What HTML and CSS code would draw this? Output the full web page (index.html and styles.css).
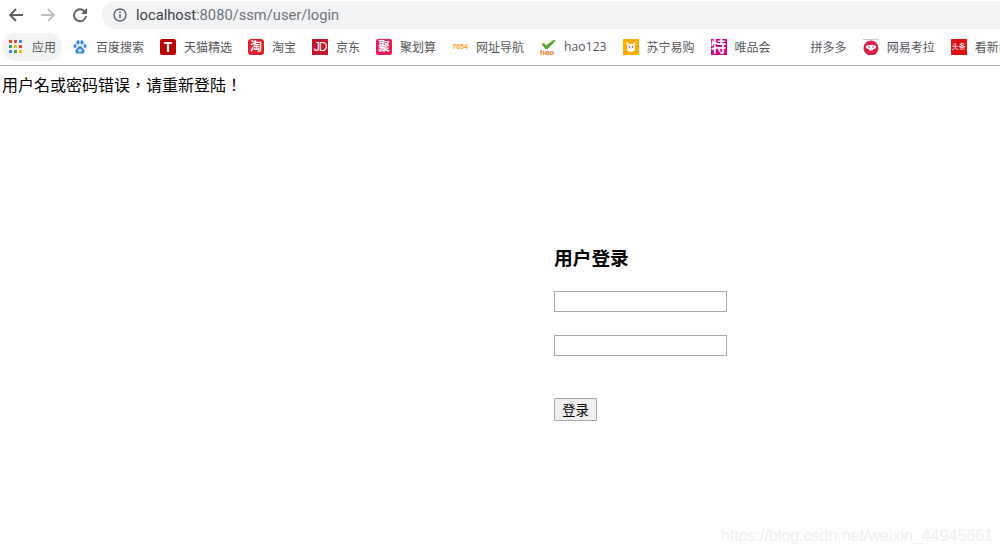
FILE: index.html
```html
<!DOCTYPE html>
<html lang="zh-CN">
<head>
    <meta charset="UTF-8">
    <meta name="viewport" content="width=device-width, initial-scale=1.0">
    <title>用户登录</title>
    <link rel="stylesheet" href="styles.css">
</head>
<body>
    <div class="browser-top">
        <div class="toolbar">
            <svg class="nav-icon" viewBox="0 0 16 16"><path d="M15 8H2.5M8 2L2 8l6 6" fill="none" stroke="#5f6368" stroke-width="1.9"/></svg>
            <svg class="nav-icon" viewBox="0 0 16 16"><path d="M1 8h12.5M8 2l6 6-6 6" fill="none" stroke="#bdc1c6" stroke-width="1.9"/></svg>
            <svg class="nav-icon" viewBox="0 0 16 16"><path d="M13.2 5.2A6 6 0 1 0 14 9" fill="none" stroke="#5f6368" stroke-width="1.9"/><path d="M15 1v6H9z" fill="#5f6368"/></svg>
            <div class="address-bar">
                <svg class="info-icon" viewBox="0 0 14 14"><circle cx="7" cy="7" r="6" fill="none" stroke="#5f6368" stroke-width="1.4"/><path d="M7 6v4.2M7 3.6v1.4" stroke="#5f6368" stroke-width="1.5"/></svg>
                <span class="host">localhost</span><span class="path">:8080/ssm/user/login</span>
            </div>
        </div>
        <div class="bookmarks">
            <div class="bookmark apps">
                <svg class="bm-icon" viewBox="0 0 14 14">
                    <rect x="0" y="0" width="3" height="3" fill="#ea4335"/><rect x="5" y="0" width="3" height="3" fill="#ea4335"/><rect x="10" y="0" width="3" height="3" fill="#4285f4"/>
                    <rect x="0" y="5" width="3" height="3" fill="#34a853"/><rect x="5" y="5" width="3" height="3" fill="#fbbc05"/><rect x="10" y="5" width="3" height="3" fill="#ea4335"/>
                    <rect x="0" y="10" width="3" height="3" fill="#4285f4"/><rect x="5" y="10" width="3" height="3" fill="#34a853"/><rect x="10" y="10" width="3" height="3" fill="#fbbc05"/>
                </svg>
                <span>应用</span>
            </div>
            <div class="bookmark">
                <svg class="bm-icon" viewBox="0 0 16 16" fill="#3388ee">
                    <ellipse cx="3" cy="7" rx="1.6" ry="2.1"/><ellipse cx="6" cy="3.4" rx="1.6" ry="2.2"/><ellipse cx="10" cy="3.4" rx="1.6" ry="2.2"/><ellipse cx="13" cy="7" rx="1.6" ry="2.1"/>
                    <path d="M8 7c-2 0-2.400 2.200-4 3.400C2.600 11.800 3.600 15 6 14.600c1-.2 3-.2 4 0 2.400.4 3.400-2.800 2-4.200C10.400 9.200 10 7 8 7z"/>
                    <circle cx="8" cy="11.500" r="1.800" fill="#cfe3fb"/>
                </svg>
                <span>百度搜索</span>
            </div>
            <div class="bookmark"><b class="bm-logo tmall">T</b><span>天猫精选</span></div>
            <div class="bookmark"><b class="bm-logo taobao">淘</b><span>淘宝</span></div>
            <div class="bookmark"><b class="bm-logo jd">JD</b><span>京东</span></div>
            <div class="bookmark"><b class="bm-logo juhua">聚</b><span>聚划算</span></div>
            <div class="bookmark"><b class="bm-logo site7654">7654</b><span>网址导航</span></div>
            <div class="bookmark">
                <svg class="bm-icon" viewBox="0 0 16 16">
                    <path d="M1.500 5l2.500-1 2 2.500L14 .5l1.500 1.500-8 8H5.500z" fill="#5aa62a"/>
                    <text x="0" y="15.500" class="hao-text">hao</text>
                </svg>
                <span class="latin">hao123</span>
            </div>
            <div class="bookmark">
                <svg class="bm-icon" viewBox="0 0 16 16">
                    <rect width="16" height="16" fill="#ffab00"/>
                    <circle cx="8" cy="9" r="4" fill="#fff"/><circle cx="4.500" cy="4.500" r="1.200" fill="#fff"/><circle cx="11.500" cy="4.500" r="1.200" fill="#fff"/>
                    <circle cx="6.500" cy="8" r=".8" fill="#533"/><circle cx="9.500" cy="8" r=".8" fill="#533"/>
                </svg>
                <span>苏宁易购</span>
            </div>
            <div class="bookmark"><b class="bm-logo vip">特</b><span>唯品会</span></div>
            <div class="bookmark"><i class="bm-blank"></i><span>拼多多</span></div>
            <div class="bookmark">
                <svg class="bm-icon" viewBox="0 0 16 16">
                    <path d="M0 .5h16" stroke="#c8ccd0" stroke-width="1"/>
                    <circle cx="8" cy="9" r="7.500" fill="#d9224a"/>
                    <path d="M3 7c1.500-1.500 8.500-1.500 10 0 .5 2-1 3-2.500 3L9.500 11.500h-3L5.500 10C4 10 2.500 9 3 7z" fill="#fff"/>
                    <circle cx="6" cy="8" r=".8" fill="#d9224a"/><circle cx="10" cy="8" r=".8" fill="#d9224a"/>
                </svg>
                <span>网易考拉</span>
            </div>
            <div class="bookmark"><b class="bm-logo toutiao">头条</b><span>看新闻</span></div>
        </div>
    </div>

    <div class="page">
        <!-- zh-TW keeps the comma and exclamation mark centred in their cells -->
        <div class="error-msg" lang="zh-TW">用户名或密码错误，请重新登陆！</div>
        <form class="login-form">
            <h3 class="login-title">用户登录</h3>
            <input class="login-input" type="text">
            <input class="login-input" type="password">
            <button class="login-btn" type="button">登录</button>
        </form>
    </div>

    <div class="watermark">https://blog.csdn.net/weixin_44945661</div>
</body>
</html>
```
FILE: styles.css
```css
html, body {
    margin: 0;
    height: 100%;
    overflow: hidden;
    background-color: #fff;
}

body {
    position: relative;
    font-family: "Noto Sans CJK SC", "Liberation Sans", sans-serif;
}

.browser-top {
    height: 65px;
    border-bottom: 1px solid #b3b3b3;
    box-sizing: content-box;
}

.toolbar {
    height: 29px;
    display: flex;
    align-items: center;
    padding-left: 8px;
    box-sizing: border-box;
}

.nav-icon {
    width: 16px;
    height: 16px;
    margin-right: 16px;
    flex: none;
}

.address-bar {
    margin-left: -2px;
    width: 898px;
    height: 28px;
    box-sizing: content-box;
    background-color: #f1f3f4;
    border-radius: 14px 0 0 14px;
    display: flex;
    align-items: center;
    padding-left: 11px;
    font-family: "Roboto", "Liberation Sans", sans-serif;
    font-size: 14.7px;
}

.info-icon {
    width: 14px;
    height: 14px;
    margin-right: 9px;
}

.host {
    color: #3c4043;
}

.path {
    color: #70757a;
}

.bookmarks {
    height: 36px;
    display: flex;
    align-items: center;
    gap: 16px;
    padding-left: 9px;
    white-space: nowrap;
    overflow: hidden;
    font-size: 12px;
    color: #54585d;
}

.bookmark {
    display: flex;
    align-items: center;
    flex: none;
}

.bookmark span {
    margin-left: 8px;
    line-height: 16px;
}

.bookmark .latin {
    font-family: "Open Sans", "Liberation Sans", sans-serif;
    font-size: 12.2px;
}

.apps {
    position: relative;
    width: 47px;
}

/* grey chip behind the apps button */
.apps::before {
    content: "";
    position: absolute;
    left: -7px;
    top: -6px;
    width: 60px;
    height: 28px;
    background-color: #f1f3f4;
    border-radius: 14px;
}

.apps svg,
.apps span {
    position: relative;
}

.apps .bm-icon {
    width: 14px;
    height: 14px;
    margin-right: 1px;
}

.bm-icon,
.bm-logo,
.bm-blank {
    width: 16px;
    height: 16px;
    flex: none;
}

.bm-logo {
    display: flex;
    align-items: center;
    justify-content: center;
    color: #fff;
    font-family: "Liberation Sans", "Noto Sans CJK SC", sans-serif;
    font-size: 12px;
    line-height: 16px;
    overflow: hidden;
}

.tmall {
    background-color: #b80000;
    font-size: 14px;
    border-radius: 2px;
}

.taobao {
    background-color: #e02030;
    border-radius: 3px;
    font-size: 12px;
}

.jd {
    background-color: #c3162c;
    font-weight: normal;
    font-size: 12px;
    letter-spacing: -1px;
}

.juhua {
    background-color: #ec1b56;
    border-radius: 2px;
}

.site7654 {
    color: #ffa31a;
    font-size: 7px;
}

.vip {
    background-color: #d6008a;
    font-size: 15px;
}

.toutiao {
    background-color: #dd1111;
    font-size: 7px;
    font-weight: normal;
    align-items: flex-start;
}

.hao-text {
    font-family: "Liberation Sans", sans-serif;
    font-size: 8px;
    font-weight: bold;
    fill: #ee7a22;
}

.page {
    padding: 10px 2px 0;
}

.error-msg {
    font-family: "Noto Sans CJK TC", "Noto Sans CJK SC", sans-serif;
    font-size: 16px;
    line-height: 17px;
    color: #000;
}

.login-form {
    display: flex;
    flex-direction: column;
    align-items: flex-start;
    margin: 152px 0 0 552px;
}

.login-title {
    margin: 0;
    font-size: 18.72px;
    line-height: 24px;
    font-weight: bold;
    color: #000;
}

.login-input {
    width: 173px;
    height: 21px;
    box-sizing: border-box;
    margin: 0 0 23px;
    padding: 1px 2px;
    border: 1px solid #a9a9a9;
    background-color: #fff;
    outline: none;
}

.login-title + .login-input {
    margin-top: 22px;
}

.login-btn {
    width: 43px;
    height: 23px;
    margin-top: 19px;
    padding: 0;
    border: 1px solid #a6a6a6;
    border-radius: 1px;
    background-color: #efefef;
    font-family: inherit;
    font-size: 13.33px;
    color: #000;
}

.watermark {
    position: absolute;
    right: 7px;
    bottom: 9px;
    font-family: "Liberation Sans", sans-serif;
    font-size: 16px;
    color: #f0f0f0;
}
```
